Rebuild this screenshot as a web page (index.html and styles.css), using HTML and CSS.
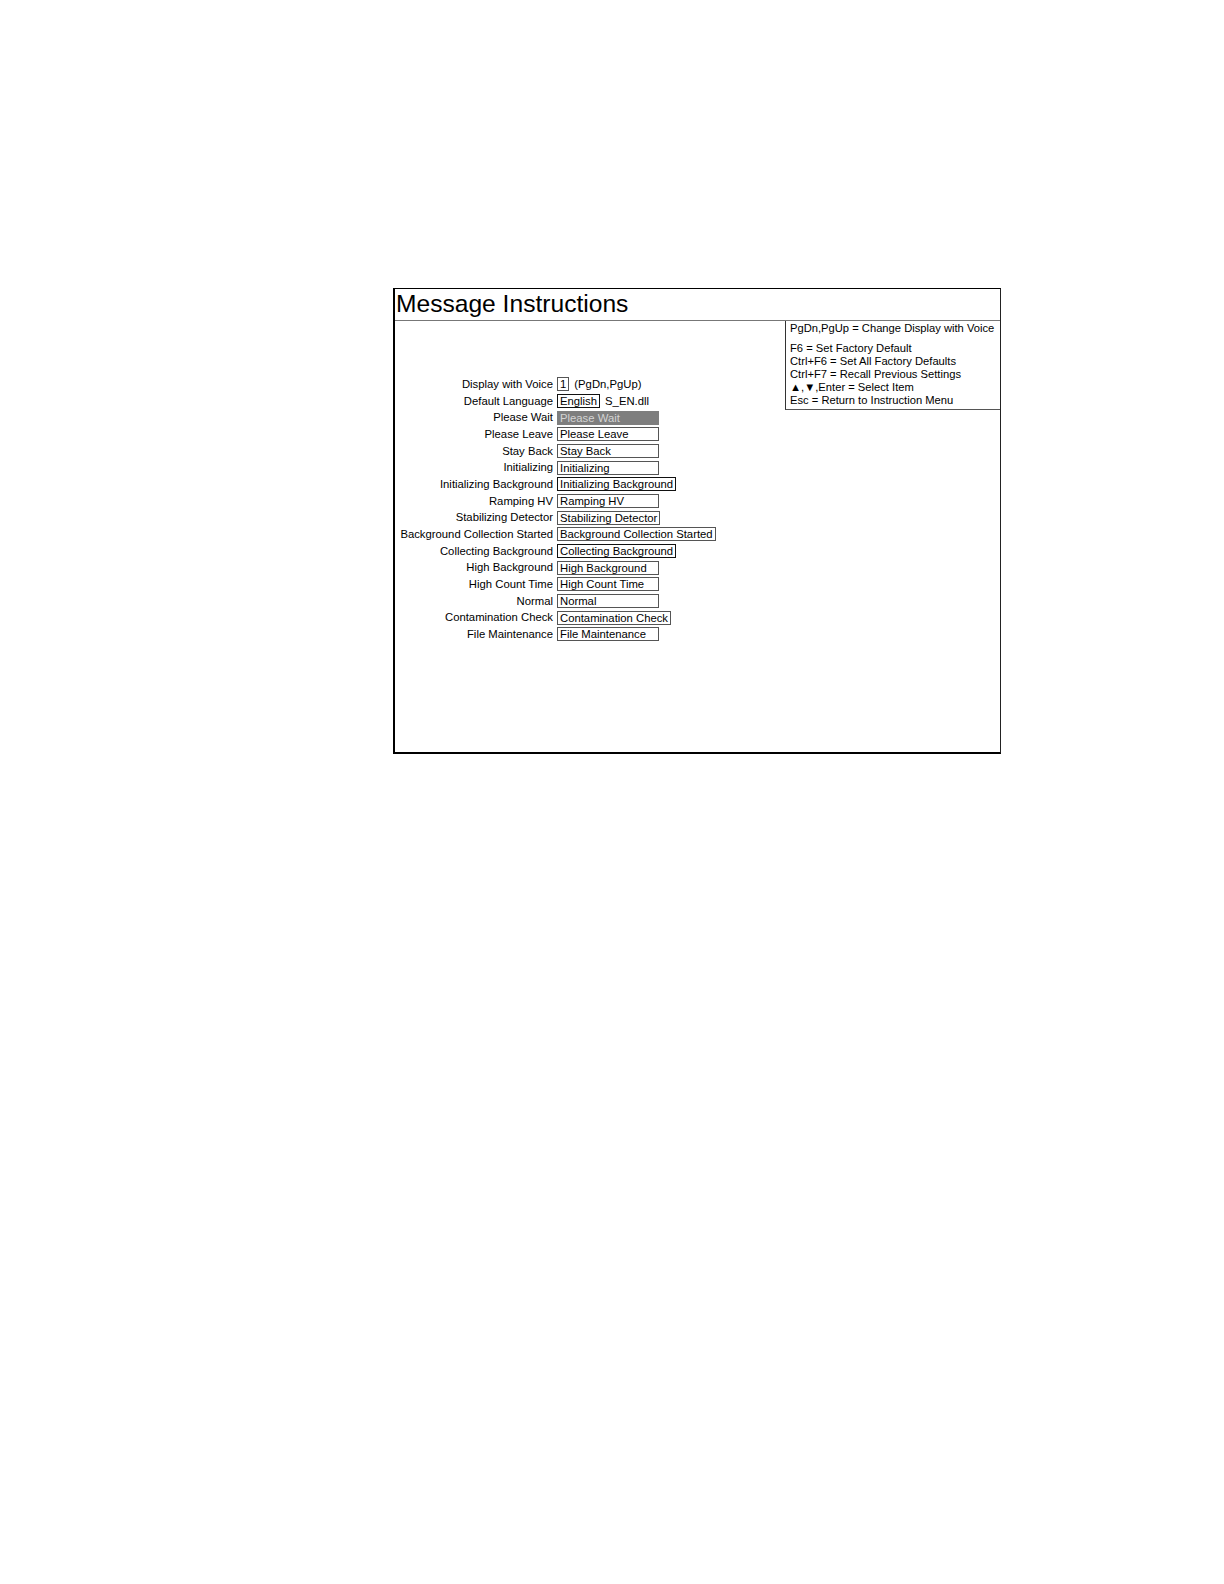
FILE: index.html
```html
<!DOCTYPE html>
<html>
<head>
<meta charset="utf-8">
<link rel="stylesheet" href="styles.css">
</head>
<body>
<div class="screen">
  <div class="title">Message Instructions</div>
  <div class="content">
    <div class="form">
      <div class="label">Display with Voice</div><div class="field"><span class="box small">1</span><span class="after">(PgDn,PgUp)</span></div>
      <div class="label">Default Language</div><div class="field"><span class="box small dark">English</span><span class="after">S_EN.dll</span></div>
      <div class="label">Please Wait</div><div class="field"><span class="box sel">Please Wait</span></div>
      <div class="label">Please Leave</div><div class="field"><span class="box">Please Leave</span></div>
      <div class="label">Stay Back</div><div class="field"><span class="box">Stay Back</span></div>
      <div class="label">Initializing</div><div class="field"><span class="box">Initializing</span></div>
      <div class="label">Initializing Background</div><div class="field"><span class="box dark">Initializing Background</span></div>
      <div class="label">Ramping HV</div><div class="field"><span class="box">Ramping HV</span></div>
      <div class="label">Stabilizing Detector</div><div class="field"><span class="box">Stabilizing Detector</span></div>
      <div class="label">Background Collection Started</div><div class="field"><span class="box">Background Collection Started</span></div>
      <div class="label">Collecting Background</div><div class="field"><span class="box dark">Collecting Background</span></div>
      <div class="label">High Background</div><div class="field"><span class="box">High Background</span></div>
      <div class="label">High Count Time</div><div class="field"><span class="box">High Count Time</span></div>
      <div class="label">Normal</div><div class="field"><span class="box">Normal</span></div>
      <div class="label">Contamination Check</div><div class="field"><span class="box">Contamination Check</span></div>
      <div class="label">File Maintenance</div><div class="field"><span class="box">File Maintenance</span></div>
    </div>
    <div class="help">
      <div class="help-line first">PgDn,PgUp = Change Display with Voice</div>
      <div class="help-line">F6 = Set Factory Default</div>
      <div class="help-line">Ctrl+F6 = Set All Factory Defaults</div>
      <div class="help-line">Ctrl+F7 = Recall Previous Settings</div>
      <div class="help-line">&#9650;,&#9660;,Enter = Select Item</div>
      <div class="help-line">Esc = Return to Instruction Menu</div>
    </div>
  </div>
</div>
</body>
</html>
```
FILE: styles.css
```css
html, body {
  margin: 0;
  padding: 0;
  background: #ffffff;
}
body {
  font-family: "Liberation Sans", Arial, sans-serif;
  color: #000;
  width: 1224px;
  height: 1584px;
}
.screen {
  margin: 288px 0 0 393px;
  width: 605px;
  height: 463px;
  border-top: 1px solid #000;
  border-right: 1px solid #222;
  border-left: 2px solid #000;
  border-bottom: 2px solid #000;
  display: flex;
  flex-direction: column;
}
.title {
  height: 31px;
  border-bottom: 1px solid #777;
  font-size: 24.6px;
  line-height: 30px;
  padding-left: 1px;
  box-sizing: content-box;
}
.content {
  flex: 1;
  display: flex;
  align-items: flex-start;
}
.form {
  flex: 1;
  display: grid;
  grid-template-columns: 158px auto;
  grid-auto-rows: 16.67px;
  column-gap: 4px;
  padding-top: 55px;
  font-size: 11.3px;
}
.label {
  text-align: right;
  line-height: 16.67px;
  white-space: nowrap;
}
.field {
  display: flex;
  align-items: center;
  gap: 5px;
}
.box {
  display: inline-block;
  box-sizing: border-box;
  min-width: 102px;
  height: 14px;
  line-height: 12px;
  border: 1px solid #555;
  padding: 0 2px;
  white-space: nowrap;
}
.box.small {
  min-width: 0;
}
.box.dark {
  border-color: #111;
}
.box.sel {
  background: #7e7e7e;
  border-color: #7e7e7e;
  color: #d4d4d4;
}
.after {
  white-space: nowrap;
}
.help {
  width: 210px;
  border-left: 1px solid #333;
  border-bottom: 1px solid #555;
  padding: 1px 0 2px 4px;
  font-size: 11.2px;
}
.help-line {
  line-height: 13px;
  white-space: nowrap;
}
.help-line.first {
  margin-bottom: 7px;
}
```
